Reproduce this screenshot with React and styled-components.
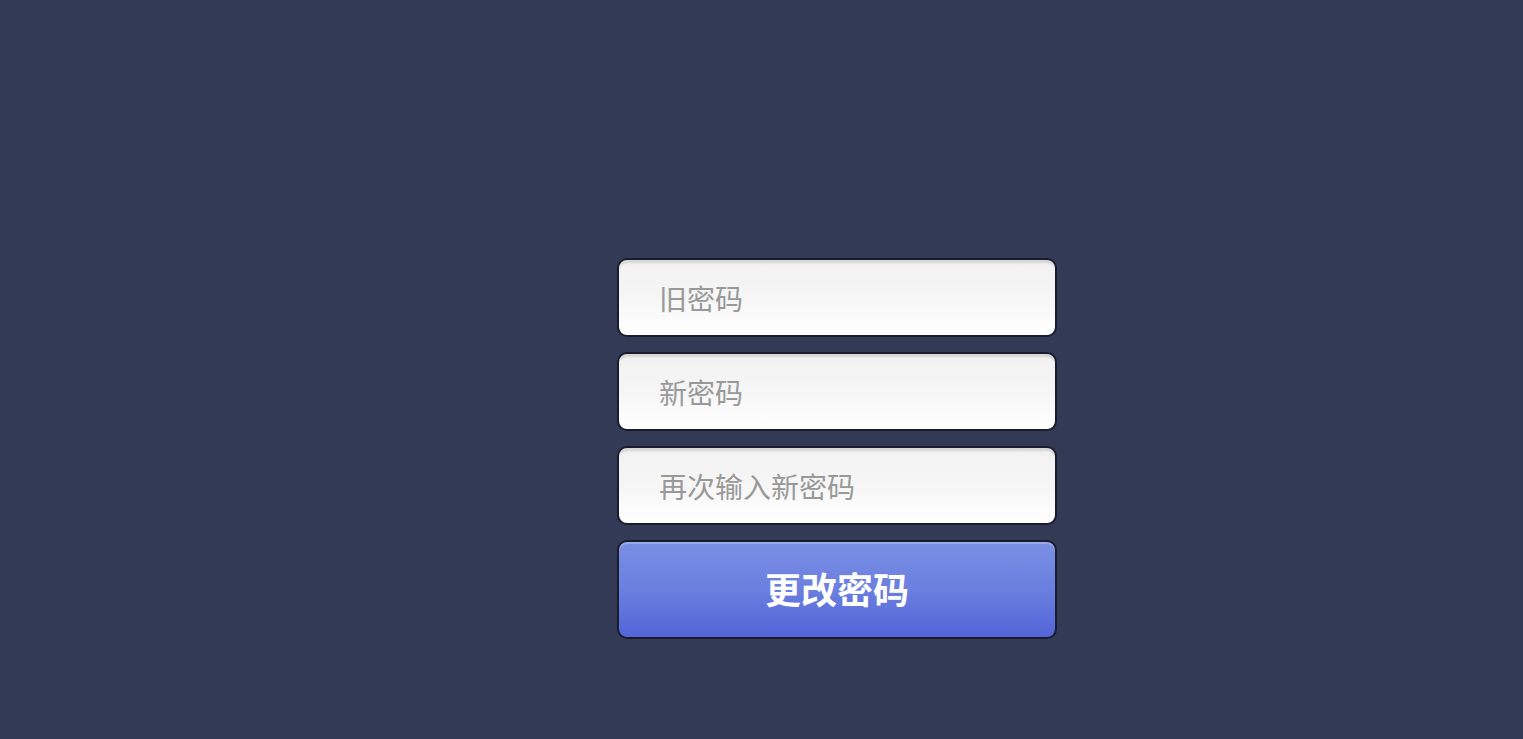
import React from 'react';
import styled, { createGlobalStyle } from 'styled-components';

const GlobalStyle = createGlobalStyle`
  html, body {
    margin: 0;
    padding: 0;
    background: #323a56;
  }
  body {
    font-family: "Noto Sans CJK SC", "Noto Sans", sans-serif;
  }
`

const Page = styled.div`
  min-height: 739px;
  box-sizing: border-box;
  padding: 258px 0 0 617px;
`

const Form = styled.form`
  width: 440px;
  display: flex;
  flex-direction: column;
  gap: 15px;
`

const Field = styled.input`
  box-sizing: border-box;
  width: 100%;
  height: 79px;
  padding: 0 0 0 40px;
  border: 2px solid #1a1c2c;
  border-radius: 10px;
  background: linear-gradient(to bottom, #f1f1f1 0%, #f6f6f6 50%, #ffffff 100%);
  box-shadow: inset 0 4px 2px -1px #d6d6d6;
  font-family: "Noto Sans CJK SC", "Noto Sans", sans-serif;
  font-size: 28px;
  color: #444;
  outline: none;

  &::placeholder {
    color: #999;
  }
`

const Submit = styled.button`
  box-sizing: border-box;
  width: 100%;
  height: 99px;
  padding: 0 0 4px;
  border: 2px solid #1a1c2c;
  border-radius: 10px;
  background: linear-gradient(to bottom, #7a8fe4 0%, #6a7fdf 50%, #5364d8 100%);
  box-shadow: inset 0 2px 1px rgba(255, 255, 255, 0.25);
  color: #fff;
  font-family: "Noto Sans CJK SC", "Noto Sans", sans-serif;
  font-size: 36px;
  font-weight: 700;
  cursor: pointer;
`

const App = () => {
  return (
    <Page>
      <GlobalStyle />
      <Form onSubmit={e => e.preventDefault()}>
        <Field type="password" placeholder="旧密码" />
        <Field type="password" placeholder="新密码" />
        <Field type="password" placeholder="再次输入新密码" />
        <Submit type="submit">更改密码</Submit>
      </Form>
    </Page>
  )
}

export default App;
